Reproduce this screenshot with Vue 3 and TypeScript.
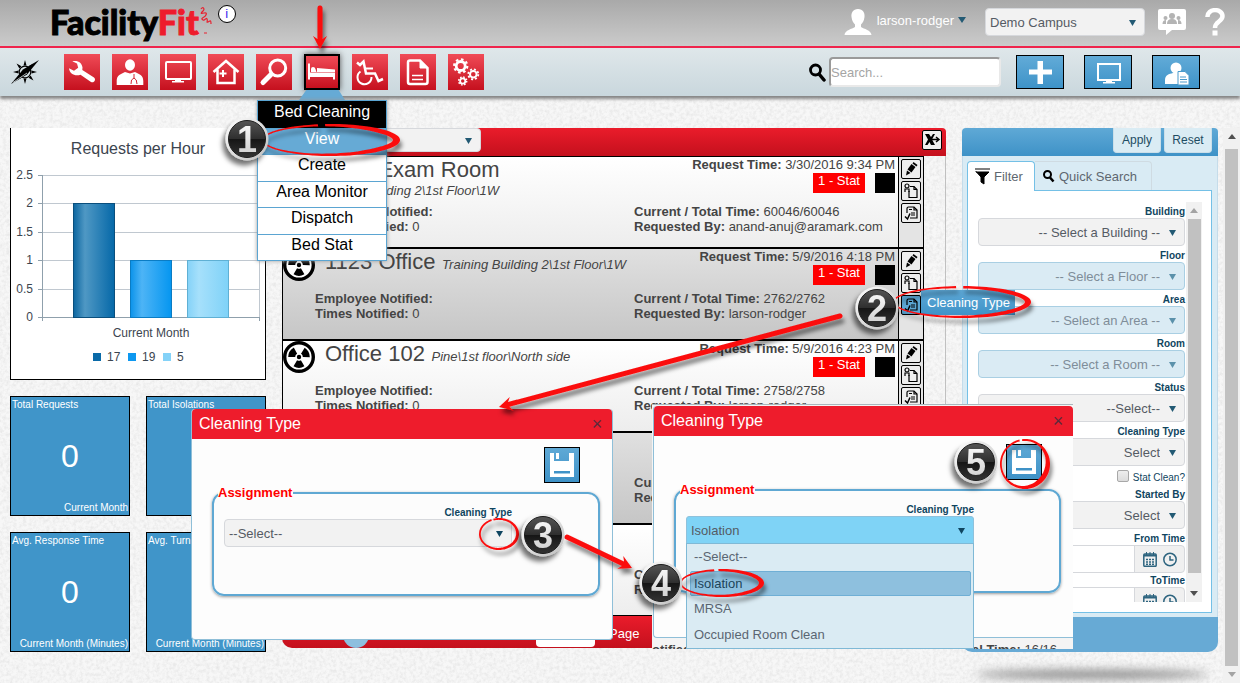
<script setup lang="ts">
import { ref } from 'vue'

interface RequestRow {
  title: string
  place: string
  time: string
  total: string
  by: string
  tip?: boolean
}

interface FilterField {
  id: string
  label: string
  value: string
  disabled?: boolean
}

const rows: RequestRow[] = [
  { title: '1122 Exam Room', place: 'Training Building 2\\1st Floor\\1W', time: '3/30/2016 9:34 PM', total: '60046/60046', by: 'anand-anuj@aramark.com' },
  { title: '1123 Office', place: 'Training Building 2\\1st Floor\\1W', time: '5/9/2016 4:18 PM', total: '2762/2762', by: 'larson-rodger', tip: true },
  { title: 'Office 102', place: 'Pine\\1st floor\\North side', time: '5/9/2016 4:23 PM', total: '2758/2758', by: 'larson-rodger' },
  { title: 'Office 103', place: 'Pine\\1st floor\\North side', time: '5/9/2016 4:25 PM', total: '2756/2756', by: 'larson-rodger' },
  { title: 'Office 104', place: 'Pine\\1st floor\\North side', time: '5/9/2016 4:27 PM', total: '2754/2754', by: 'larson-rodger' },
]

const topFields: FilterField[] = [
  { id: 'building', label: 'Building', value: '-- Select a Building --' },
  { id: 'floor', label: 'Floor', value: '-- Select a Floor --', disabled: true },
  { id: 'area', label: 'Area', value: '-- Select an Area --', disabled: true },
  { id: 'room', label: 'Room', value: '-- Select a Room --', disabled: true },
  { id: 'status', label: 'Status', value: '--Select--' },
  { id: 'cleaning', label: 'Cleaning Type', value: 'Select' },
]

const tiles = [
  { name: 'Total Requests', period: 'Current Month' },
  { name: 'Total Isolations', period: 'Current Month' },
  { name: 'Avg. Response Time', period: 'Current Month (Minutes)' },
  { name: 'Avg. Turn Time', period: 'Current Month (Minutes)' },
]

const menuItems = ['View', 'Create', 'Area Monitor', 'Dispatch', 'Bed Stat']
const typeOptions = ['--Select--', 'Isolation', 'MRSA', 'Occupied Room Clean']
const chosenType = ref('Isolation')
const statClean = ref(false)
const search = ref('')

const gridLines = [
  { y: 47, label: '2.5' },
  { y: 75, label: '2' },
  { y: 104, label: '1.5' },
  { y: 132, label: '1' },
  { y: 161, label: '0.5' },
  { y: 189, label: '0' },
]
const bars = [
  { x: 62, y: 75, h: 114, fill: 'url(#barA)', line: '#0a4f7d', name: '17', key: '#0a6aa8', kx: 82 },
  { x: 119, y: 132, h: 57, fill: 'url(#barB)', line: '#0a7cc4', name: '19', key: '#0d98f0', kx: 117 },
  { x: 176, y: 132, h: 57, fill: 'url(#barC)', line: '#5fb0d4', name: '5', key: '#84d2f8', kx: 152 },
]

/* Hand-drawn ring: a closed band, thickest at the angle `peak`, open at the angle `gap`. */
function ring(cx: number, cy: number, rx: number, ry: number, max: number, peak: number, gap: number): string {
  const outer: string[] = []
  const inner: string[] = []
  const steps = 90
  for (let i = 0; i <= steps; i++) {
    const a = ((gap + 3 + (354 * i) / steps) * Math.PI) / 180
    const k = Math.pow((1 + Math.cos(a - (peak * Math.PI) / 180)) / 2, 3)
    const w = 1.8 + (max - 1.8) * k
    outer.push((cx + rx * Math.cos(a)).toFixed(1) + ' ' + (cy + ry * Math.sin(a)).toFixed(1))
    inner.unshift((cx + (rx - w) * Math.cos(a)).toFixed(1) + ' ' + (cy + (ry - w) * Math.sin(a)).toFixed(1))
  }
  return 'M' + outer.join('L') + 'L' + inner.join('L') + 'Z'
}

const rings = [
  ring(331, 140, 69, 16, 7, 0, -98),
  ring(962, 302, 69, 16, 6, 0, -92),
  ring(499, 534, 20, 16, 3, 20, -110),
  ring(722, 583, 42, 14, 5, 0, -98),
  ring(1025, 464, 25, 25, 5, 30, -100),
]

interface Arrow { x: number; y: number; tx: number; ty: number }
const arrows: Arrow[] = [
  { x: 320, y: 8, tx: 320, ty: 49 },
  { x: 840, y: 316, tx: 499, ty: 407 },
  { x: 567, y: 537, tx: 632, ty: 568 },
]
function arrowLength(a: Arrow): number {
  return Math.hypot(a.tx - a.x, a.ty - a.y)
}
function arrowPath(a: Arrow): string {
  const l = arrowLength(a)
  return `M0 -2.5L${l - 10} -2.5L${l - 13} -7L${l} 0L${l - 13} 7L${l - 10} 2.5L0 2.5A2.5 2.5 0 0 1 0 -2.5Z`
}
function arrowPlace(a: Arrow): string {
  const deg = (Math.atan2(a.ty - a.y, a.tx - a.x) * 180) / Math.PI
  return `translate(${a.x} ${a.y}) rotate(${deg})`
}

const badges = [
  { n: 1, x: 247, y: 139 },
  { n: 2, x: 877, y: 308 },
  { n: 3, x: 543, y: 535 },
  { n: 4, x: 661, y: 583 },
  { n: 5, x: 976, y: 462 },
]
const rays = [0, 45, 90, 135, 180, 225, 270, 315]
</script>

<template>
  <div class="page">
    <svg class="texture" aria-hidden="true">
      <filter id="plaster" x="0" y="0" width="100%" height="100%">
        <feTurbulence type="fractalNoise" baseFrequency="0.3" numOctaves="4" seed="4" />
        <feColorMatrix values="0 0 0 0 0.4  0 0 0 0 0.4  0 0 0 0 0.4  0.4 0 0 0 -0.15" />
      </filter>
      <rect width="100%" height="100%" filter="url(#plaster)" />
    </svg>

    <header class="top">
      <div class="logo"><span>Facility</span><span class="fit">Fit</span></div>
      <svg class="swirl" width="12" height="30" viewBox="0 0 12 30" fill="none" stroke="#e8202e" stroke-width="1.2" aria-hidden="true">
        <path d="M1 2C3 -1 5 2 3 4S0 7 4 6S6 9 4 10S1 12 3 13S6 10 7 12S6 16 8 15S11 12 11 17" />
        <path d="M4 26H7" stroke-width="1" />
      </svg>
      <button class="info" aria-label="Information">i</button>

      <div class="spacer"></div>
      <svg width="28" height="28" viewBox="0 0 28 28" fill="#fff" aria-hidden="true">
        <path d="M14 1C9 1 7 5 7.500 9C8 13 9.500 15 11 16.500V19C8 21 1 22 .5 27H27.500C27 22 20 21 17 19V16.500C18.500 15 20 13 20.500 9C21 5 19 1 14 1Z" />
      </svg>
      <button class="user">larson-rodger<i class="caret"></i></button>
      <div class="pick campus">
        <select aria-label="Campus"><option>Demo Campus</option></select>
      </div>
      <button class="bare chat" aria-label="Messages">
        <svg width="28" height="28" viewBox="0 0 28 28">
          <path d="M2 1H26Q28 1 28 3V20Q28 22 26 22H14L8 27V22H2Q0 22 0 20V3Q0 1 2 1Z" fill="#fff" />
          <g fill="#b4b4b4"><circle cx="14" cy="8" r="3" /><path d="M9 16Q9 11 14 11T19 16Z" /><circle cx="7.500" cy="10" r="2" /><path d="M4.500 16Q4.500 12 8 12L8 16Z" /><circle cx="20.500" cy="10" r="2" /><path d="M23.500 16Q23.500 12 20 12V16Z" /></g>
        </svg>
      </button>
      <button class="bare" aria-label="Help">
        <svg width="20" height="28" viewBox="0 0 20 28">
          <path d="M2.500 9C2 0 17.500 0 17.500 8C17.500 14 10 13 10 20" fill="none" stroke="#fff" stroke-width="4.500" />
          <rect x="7.500" y="22.500" width="5" height="5" fill="#fff" />
        </svg>
      </button>
    </header>

    <nav class="bar">
      <svg class="compass" width="28" height="26" viewBox="0 0 28 26" aria-hidden="true">
        <g transform="translate(14 13)" fill="#000">
          <path v-for="r in rays" :key="r" d="M-1.500 -6.500L0 -12L1.500 -6.500Z" :transform="`rotate(${r})`" />
          <circle r="5.800" fill="none" stroke="#000" stroke-width="1.200" />
          <path d="M-14 12L-2 -2.500L14 -12L2 2.500Z" />
          <path d="M-12 10.500L2 1" stroke="#dbe4e8" stroke-width=".8" />
        </g>
      </svg>
      <div class="tools">
        <button aria-label="Work orders"><svg viewBox="0 0 36 36"><path d="M5 14.300L10 16.700L14.200 13.700L13 9.500L8.300 7.300C14 6 18 9 18.500 13.500L18.300 16L30 23.500C32.500 25.500 30 29.500 27 28L16.500 20.800C11 22.500 5.500 20 5 14.300Z" fill="#fff" /></svg></button>
        <button aria-label="Patients"><svg viewBox="0 0 36 36" fill="#fff"><ellipse cx="18" cy="11" rx="5" ry="5.800" /><path d="M4.700 31V27C4.700 21 9 20 13 18L18 19.500L23 18C27 20 31.300 21 31.300 27V31Z" /><path d="M22 20V24M22 24Q18.500 25 19 30M22 24Q25 25 25 30" fill="none" stroke="#d42734" /></svg></button>
        <button aria-label="Monitor"><svg viewBox="0 0 36 36"><rect x="6" y="8" width="25" height="17" rx="1" fill="none" stroke="#fff" stroke-width="2" /><path d="M15 25H21V27H24V28.500H12V27H15Z" fill="#fff" /></svg></button>
        <button aria-label="Facility"><svg viewBox="0 0 36 36" fill="none" stroke="#fff" stroke-width="2.500"><path d="M5.500 18L18 7L30.500 18M9.500 15.500V29H26.500V15.500" /><path d="M11.500 19.500H18.500M15 16V23" stroke-width="2" /></svg></button>
        <button aria-label="Find"><svg viewBox="0 0 36 36" fill="none" stroke="#fff"><circle cx="21.700" cy="14" r="8" stroke-width="3" /><path d="M15 20.500L7 28.500" stroke-width="5" stroke-linecap="round" /></svg></button>
        <div class="drop">
          <button class="on" aria-label="Bed Cleaning"><svg viewBox="2 2 32 32" fill="#fff"><path d="M4 9.500H6V18.500H31V25.500H29V23H6V25.500H4ZM13 14L31 15.500V18H13Z" /><path d="M7 15Q7 13 9 13T11.500 15T12.500 18H7Z" /></svg></button>
          <ul class="menu">
            <li class="head">Bed Cleaning</li>
            <li v-for="(m, i) in menuItems" :key="m" :class="{ hot: i === 0 }"><a href="#">{{ m }}</a></li>
          </ul>
        </div>
        <button aria-label="Transport"><svg viewBox="0 0 36 36" fill="none" stroke="#fff" stroke-width="2"><path d="M8.500 17.500A7 7 0 1 0 19.500 23" /><path d="M5 8.500L8 11L11.500 7.500L14 19.500H23L26.500 27L31 25" stroke-width="2.500" /><path d="M13 14.500H21" /></svg></button>
        <button aria-label="Reports"><svg viewBox="0 0 36 36" fill="none" stroke="#fff" stroke-width="2.500"><path d="M20 6.500H10Q8 6.500 8 8.500V28Q8 30 10 30H25.500Q27.500 30 27.500 28V14Z" /><path d="M20 7V14H27Z" fill="#fff" stroke-width="1" /><path d="M12 21.500H23M12 25.500H23" stroke-width="1.500" /></svg></button>
        <button aria-label="Settings"><svg viewBox="0 0 36 36" fill="none" stroke="#fff"><circle cx="12.700" cy="12" r="4.500" stroke-width="2.800" /><circle cx="12.700" cy="12" r="6.600" stroke-width="2.200" stroke-dasharray="2.600 2.584" /><circle cx="25.300" cy="20.300" r="3.300" stroke-width="2" /><circle cx="25.300" cy="20.300" r="5" stroke-width="1.800" stroke-dasharray="2 1.927" /><circle cx="14.700" cy="27" r="2.600" stroke-width="1.800" /><circle cx="14.700" cy="27" r="4" stroke-width="1.500" stroke-dasharray="1.600 1.541" /></svg></button>
      </div>
      <div class="spacer"></div>
      <label class="find" for="search">
        <svg width="17" height="19" viewBox="0 0 17 19" fill="none" stroke="#000" aria-hidden="true"><circle cx="6.500" cy="7" r="5" stroke-width="2.800" /><path d="M10 11L15 17" stroke-width="3.500" stroke-linecap="round" /></svg>
      </label>
      <input id="search" v-model="search" class="search" type="text" placeholder="Search..." />
      <div class="acts">
        <button aria-label="Add"><svg viewBox="0 0 46 32"><path d="M20.500 5H26V13.500H35V18.500H26V28H20.500V18.500H12V13.500H20.500Z" fill="#fff" /></svg></button>
        <button aria-label="Display"><svg viewBox="0 0 46 32"><rect x="13" y="8" width="22" height="16" fill="none" stroke="#fff" stroke-width="2" /><path d="M21 24H27V26H30V27.500H18V26H21Z" fill="#fff" /></svg></button>
        <button aria-label="Requester report"><svg viewBox="0 0 46 32"><circle cx="23" cy="12" r="5.500" fill="#fff" /><path d="M12 28V24C12 19 16 18 20 17H28V28Z" fill="#fff" /><path d="M25 15.500H32L36 19.500V29H25Z" fill="#fff" stroke="#4a9acc" /><path d="M27 21H33M27 23.500H34M27 26H34" stroke="#4a9acc" /></svg></button>
      </div>
    </nav>

    <main class="main">
      <section class="left">
        <svg class="chart" viewBox="0 0 254 251" role="img" aria-label="Requests per Hour">
          <defs>
            <linearGradient id="barA"><stop offset="0" stop-color="#0c66a0" /><stop offset=".28" stop-color="#4f98c4" /><stop offset="1" stop-color="#0568a8" /></linearGradient>
            <linearGradient id="barB"><stop offset="0" stop-color="#0b93ea" /><stop offset=".28" stop-color="#4db4f6" /><stop offset="1" stop-color="#0596f0" /></linearGradient>
            <linearGradient id="barC"><stop offset="0" stop-color="#84d2f8" /><stop offset=".28" stop-color="#a6e0fb" /><stop offset="1" stop-color="#7fd2f8" /></linearGradient>
          </defs>
          <text x="127" y="26" text-anchor="middle" class="chart-title">Requests per Hour</text>
          <g v-for="g in gridLines" :key="g.label">
            <path :d="`M27 ${g.y + 0.5}H248`" stroke="#c0c8d0" />
            <path :d="`M27 ${g.y + 0.5}H32`" stroke="#8fa0ac" />
            <text x="22" :y="g.y + 4" text-anchor="end">{{ g.label }}</text>
          </g>
          <path d="M31.500 47V193M27 189.500H249M248.500 189V193" stroke="#8fa0ac" fill="none" />
          <path d="M248.500 47V189" stroke="#c0c8d0" />
          <g v-for="b in bars" :key="b.name">
            <rect :x="b.x + 0.5" :y="b.y + 0.5" width="41" :height="b.h" :fill="b.fill" :stroke="b.line" />
            <rect :x="b.kx" y="225" width="8" height="8" :fill="b.key" />
            <text :x="b.kx + 14" y="233">{{ b.name }}</text>
          </g>
          <text x="140" y="209" text-anchor="middle">Current Month</text>
        </svg>
        <div class="tiles">
          <article v-for="t in tiles" :key="t.name" class="tile">
            <span>{{ t.name }}</span><strong>0</strong><span class="period">{{ t.period }}</span>
          </article>
        </div>
      </section>

      <section class="center">
        <div class="center-head">
          <div class="pick view"><select aria-label="List view"><option></option></select></div>
          <button class="mini" aria-label="Export to Excel"><svg viewBox="0 0 18 18"><path d="M2 3H6L8 6L10 3H12L9 8.500L12 14H8L6.500 11L4.500 14H2L5 8.500Z" fill="#000" /><path d="M9 8.500H15M13 6L16 8.500L13 11" fill="none" stroke="#000" stroke-width="1.500" /></svg></button>
        </div>
        <div class="list">
          <article v-for="r in rows" :key="r.title" class="row">
            <svg class="rad" width="32" height="32" viewBox="0 0 32 32" aria-hidden="true">
              <circle cx="16" cy="16" r="14.300" fill="#fff" stroke="#000" stroke-width="3.400" />
              <circle cx="16" cy="16" r="7.300" fill="none" stroke="#000" stroke-width="7" stroke-dasharray="7.644 7.644" transform="rotate(60 16 16)" />
              <circle cx="16" cy="16" r="2.200" />
            </svg>
            <div class="what"><span class="room">{{ r.title }}</span> <em>{{ r.place }}</em></div>
            <div class="when">
              <div><b>Request Time:</b> {{ r.time }}</div>
              <div class="flags"><span class="stat">1 - Stat</span><span class="swatch"></span></div>
            </div>
            <div class="told"><b>Employee Notified:</b><br /><b>Times Notified:</b> 0</div>
            <div class="took"><b>Current / Total Time:</b> {{ r.total }}<br /><b>Requested By:</b> {{ r.by }}</div>
            <div class="ops">
              <button class="mini" aria-label="Edit"><svg viewBox="0 0 18 18"><path d="M4 15.500L5 10.500L8.500 13Z" /><path d="M5.500 9.500L9.500 4L13.500 7L9.500 12.500Z" /><path d="M10.500 3.500L11.500 2L15.500 5L14.500 6.500Z" /></svg></button>
              <button class="mini" aria-label="Assign"><svg viewBox="0 0 18 18" fill="none" stroke="#000" stroke-width="1.200"><path d="M8 4.500H12L15 7.500V15.500H7V9" /><path d="M12 4.500V7.500H15" /><circle cx="5" cy="4" r="2" /><path d="M3 10V7H7V10" /></svg></button>
              <div class="hint">
                <button class="mini" :class="{ lit: r.tip }" aria-label="Cleaning Type"><svg viewBox="0 0 18 18" fill="none" stroke="#000" stroke-width="1.200"><path d="M5 9V4.500Q5 3 6.500 3H12L15 6V14H8" /><path d="M9 9H13M9 11H13M7 5.500H10M12 3V6H15" /><path d="M3 12.500L5.500 15L8 9.500" stroke-width="1.500" /></svg></button>
                <span v-if="r.tip" class="tip" role="tooltip">Cleaning Type</span>
              </div>
            </div>
          </article>
        </div>
        <div class="center-foot">
          <span class="knob"></span>
          <span class="pager"></span>
          <span class="per">Page</span>
        </div>
      </section>

      <aside class="right">
        <div class="right-head"><button>Apply</button><button>Reset</button></div>
        <div class="right-body">
          <div class="tabs">
            <button class="tab now"><svg width="15" height="17" viewBox="0 0 15 17"><path d="M0 1H15M1 4H14L9 9V16L6 14V9L1 3.500Z" stroke="#000" /></svg>Filter</button>
            <button class="tab"><svg width="12" height="13" viewBox="0 0 12 13" fill="none" stroke="#000"><circle cx="4.500" cy="4.500" r="3.500" stroke-width="2" /><path d="M7 7.500L10.500 11.500" stroke-width="2.500" /></svg>Quick Search</button>
          </div>
          <div class="sheet">
            <form class="fields" @submit.prevent>
              <div v-for="f in topFields" :key="f.id" class="field">
                <label :for="f.id">{{ f.label }}</label>
                <div class="pick end" :class="{ off: f.disabled }"><select :id="f.id" :disabled="f.disabled"><option>{{ f.value }}</option></select></div>
              </div>
              <div class="check"><input id="statclean" v-model="statClean" type="checkbox" /><label for="statclean">Stat Clean?</label></div>
              <div class="field">
                <label for="started">Started By</label>
                <div class="pick end"><select id="started"><option>Select</option></select></div>
              </div>
              <div v-for="d in ['From Time', 'ToTime']" :key="d" class="field">
                <label :for="d">{{ d }}</label>
                <div class="date">
                  <input :id="d" type="text" />
                  <span class="date-icons">
                    <svg width="14" height="15" viewBox="0 0 14 15" fill="none" stroke="#2d647f"><rect x=".8" y="2" width="12.400" height="12.300" rx="1" stroke-width="1.500" /><path d="M1 3.500H13" stroke-width="2" /><path d="M3.500 0V3M7 0V3M10.500 0V3" /><path d="M3 7.500H11M3 10H11M3 12.300H11" stroke-width="1.500" stroke-dasharray="2 1" /></svg>
                    <svg width="14" height="15" viewBox="0 0 14 15" fill="none" stroke="#2d647f" stroke-width="1.500"><circle cx="7" cy="7.500" r="6.200" /><path d="M7 4V8H10.500" /></svg>
                  </span>
                </div>
              </div>
            </form>
            <div class="rail"><i class="up dim"></i><i class="thumb short"></i><i class="down"></i></div>
          </div>
        </div>
        <div class="right-foot"></div>
      </aside>

      <div class="rail outer"><i class="up"></i><i class="thumb"></i><i class="down dim"></i></div>
    </main>

    <section class="dialog one" role="dialog" aria-label="Cleaning Type">
      <header class="dialog-head"><h2>Cleaning Type</h2><button class="close" aria-label="Close">×</button></header>
      <div class="save-line">
        <button class="save" aria-label="Save"><svg viewBox="0 0 34 34"><path d="M5 5H9V13H24V5H29V29H5Z" fill="#fff" /><path d="M11 5H14V11H11Z" fill="#fff" /><path d="M9 23H25V25.500H9Z" fill="#3f92c7" /></svg></button>
      </div>
      <fieldset>
        <legend>Assignment</legend>
        <div class="assign">
          <label for="type-a">Cleaning Type</label>
          <div class="pick"><select id="type-a"><option>--Select--</option></select></div>
        </div>
      </fieldset>
    </section>

    <div class="shot">
      <section class="dialog two" role="dialog" aria-label="Cleaning Type">
        <header class="dialog-head"><h2>Cleaning Type</h2><button class="close" aria-label="Close">×</button></header>
        <div class="save-line">
          <button class="save" aria-label="Save"><svg viewBox="0 0 34 34"><path d="M5 5H9V13H24V5H29V29H5Z" fill="#fff" /><path d="M11 5H14V11H11Z" fill="#fff" /><path d="M9 23H25V25.500H9Z" fill="#3f92c7" /></svg></button>
        </div>
        <fieldset>
          <legend>Assignment</legend>
          <div class="assign">
            <label for="type-b">Cleaning Type</label>
            <div class="pick open">
              <select id="type-b" v-model="chosenType"><option v-for="o in typeOptions" :key="o">{{ o }}</option></select>
              <ul class="options" role="listbox" aria-label="Cleaning types">
                <li v-for="o in typeOptions" :key="o" role="option" :aria-selected="o === chosenType" :class="{ hot: o === chosenType }">{{ o }}</li>
              </ul>
            </div>
          </div>
        </fieldset>
      </section>
      <div class="under"><b>otified:</b><span><b>al Time:</b> 16/16</span></div>
    </div>

    <svg class="notes" width="1240" height="683" viewBox="0 0 1240 683">
      <defs>
        <linearGradient id="rim" x2="1" y2="1"><stop offset="0" stop-color="#fff" /><stop offset="1" stop-color="#bdbdbd" /></linearGradient>
        <linearGradient id="ball" x2="0" y2="1"><stop offset="0" stop-color="#555" /><stop offset=".5" stop-color="#2e2e2e" /><stop offset=".51" stop-color="#161616" /><stop offset="1" stop-color="#333" /></linearGradient>
        <linearGradient id="digit" x2="0" y2="1"><stop offset="0" stop-color="#fff" /><stop offset="1" stop-color="#c9c9c9" /></linearGradient>
        <filter id="shade" filterUnits="userSpaceOnUse" x="0" y="0" width="1240" height="683"><feDropShadow dx="2" dy="5" stdDeviation="2" flood-opacity=".5" /></filter>
        <filter id="ballshade" x="-40%" y="-40%" width="180%" height="180%"><feDropShadow dx="-3" dy="5" stdDeviation="2.500" flood-opacity=".55" /></filter>
      </defs>
      <g fill="#fb0d0d" filter="url(#shade)">
        <path v-for="(r, i) in rings" :key="i" :d="r" />
        <path v-for="a in arrows" :key="a.x" :d="arrowPath(a)" :transform="arrowPlace(a)" />
      </g>
      <g v-for="b in badges" :key="b.n" :transform="`translate(${b.x} ${b.y})`">
        <circle r="21.500" fill="url(#rim)" filter="url(#ballshade)" />
        <circle r="18.500" fill="url(#ball)" stroke="#1c1c1c" />
        <text y="13" text-anchor="middle" class="digit">{{ b.n }}</text>
      </g>
    </svg>
  </div>
</template>

<style>
body {
  margin: 0;
}
</style>

<style scoped>
* {
  box-sizing: border-box;
}
.page {
  position: relative;
  display: flex;
  flex-direction: column;
  min-height: 100vh;
  overflow: hidden;
  background: #f7f7f7;
  color: #444;
  font: 13px/15px "Liberation Sans", Arial, sans-serif;
}
button,
select,
input {
  font: inherit;
  color: inherit;
  margin: 0;
}
button {
  padding: 0;
  border: 0;
  background: none;
}
svg {
  display: block;
}
ul {
  margin: 0;
  padding: 0;
  list-style: none;
}
.texture {
  position: absolute;
  inset: 0;
  width: 100%;
  height: 100%;
}
.spacer {
  flex: 1;
}

/* top strip */
.top {
  position: relative;
  display: flex;
  align-items: center;
  height: 48px;
  padding: 0 15px 2px 50px;
  border-bottom: 2px solid #f0244c;
  background: linear-gradient(#a9a9a9, #cbcbcb);
}
.logo {
  font: 900 34px/40px Lato, "Liberation Sans", sans-serif;
  color: #000;
  -webkit-text-stroke: 1px currentColor;
}
.fit {
  color: #ee1c2c;
}
.swirl {
  margin-left: 1px;
}
.info {
  width: 18px;
  height: 18px;
  margin: 0 0 16px 6px;
  border: 1px solid #000;
  border-radius: 50%;
  background: #fff;
  color: #3a2cf0;
  line-height: 16px;
}
.user {
  display: flex;
  align-items: center;
  gap: 4px;
  margin: 0 19px 4px 5px;
  color: #fff;
}
.caret {
  width: 0;
  height: 0;
  border: 4px solid transparent;
  border-top: 6px solid #235a74;
  border-bottom: 0;
}
.campus {
  width: 160px;
}
.chat {
  margin: 0 19px 0 13px;
}

/* select boxes */
.pick {
  position: relative;
}
.pick select {
  display: block;
  width: 100%;
  height: 28px;
  padding: 0 24px 0 4px;
  border: 1px solid #d6d8dc;
  border-radius: 4px;
  background: #f2f2f2;
  color: #555b64;
  appearance: none;
  opacity: 1;
}
.pick::after {
  content: "";
  position: absolute;
  top: 12px;
  right: 9px;
  width: 7px;
  height: 6px;
  background: #235a74;
  clip-path: polygon(0 0, 100% 0, 50% 100%);
  pointer-events: none;
}
.end select {
  text-align: right;
  text-align-last: right;
}
.off select {
  border-color: #a9cfe3;
  background: #daebf4;
  color: #7f8d99;
}
.off::after {
  background: #5b91ab;
}

/* tool strip */
.bar {
  position: relative;
  z-index: 5;
  display: flex;
  align-items: center;
  height: 48px;
  padding: 0 40px 0 11px;
  background: linear-gradient(#dfe7ea, #c9d7dd);
  box-shadow: 0 3px 3px #858585;
}
.tools {
  display: flex;
  gap: 12px;
  margin-left: 25px;
}
.tools button {
  display: block;
  width: 36px;
  height: 36px;
  background: linear-gradient(#f04b57, #c5101e);
}
.drop {
  position: relative;
}
.tools .on {
  border: 2px solid #000;
  box-shadow: 0 0 6px #555;
}
.drop::after {
  content: "";
  position: absolute;
  top: 36px;
  left: -5px;
  width: 46px;
  height: 10px;
  background: #66aad5;
  clip-path: polygon(16% 0, 86% 0, 100% 100%, 0 100%);
}
.menu {
  position: absolute;
  z-index: 1;
  top: 46px;
  left: -47px;
  display: grid;
  grid-auto-rows: 1fr;
  width: 130px;
  height: 161px;
  border: 1px solid #5ba5d2;
  background: #fff;
  color: #000;
  font-size: 16px;
  line-height: 22px;
  text-align: center;
  box-shadow: 0 0 4px #999;
}
.menu li + li {
  border-top: 1px solid #5ba5d2;
  line-height: 20px;
}
.menu .head {
  background: #000;
  color: #fff;
}
.menu .hot {
  background: #66aad5;
}
.menu a {
  display: block;
  color: #000;
  text-decoration: none;
}
.menu .hot a {
  color: #fff;
}
.find {
  margin-right: 3px;
}
.search {
  width: 172px;
  height: 30px;
  padding: 0;
  border: 2px solid #e9e9e9;
  border-top-color: #9a9a9a;
  border-left-color: #9a9a9a;
  border-radius: 4px;
  background: #fff;
}
.search::placeholder {
  color: #a5a5a5;
}
.acts {
  display: flex;
  gap: 20px;
  margin-left: 15px;
}
.acts button {
  width: 48px;
  height: 34px;
  border: 1px solid #000;
  background: linear-gradient(#62abd8, #3e93c8);
}

/* page body */
.main {
  position: relative;
  display: flex;
  flex: 1;
  align-items: flex-start;
  gap: 16px;
  padding: 32px 0 0 10px;
}
.left {
  width: 256px;
}
.chart {
  width: 100%;
  border: 1px solid #000;
  border-top: 0;
  background: #fff;
  font-size: 12px;
}
.chart text {
  fill: #3c454f;
}
.chart .chart-title {
  font-size: 16px;
}
.tiles {
  display: grid;
  grid-template-columns: 1fr 1fr;
  gap: 16px;
  margin-top: 16px;
}
.tile {
  display: flex;
  flex-direction: column;
  justify-content: space-between;
  height: 120px;
  padding: 1px;
  border: 1px solid #000;
  background: #4095c9;
  color: #fff;
  font-size: 10px;
  line-height: 13px;
  white-space: nowrap;
}
.tile strong {
  font-size: 32px;
  font-weight: 400;
  line-height: 32px;
  text-align: center;
}
.period {
  text-align: right;
}

/* request list */
.center {
  position: relative;
  z-index: 2;
  flex: 1;
  min-width: 0;
}
.center-head {
  display: flex;
  justify-content: space-between;
  height: 28px;
  padding: 0 4px;
  border-radius: 0 4px 0 0;
  background: linear-gradient(#ea1c2b, #c4101d);
}
.view {
  width: 195px;
  height: 24px;
}
.view select {
  height: 24px;
}
.view::after {
  top: 10px;
}
.mini {
  display: block;
  width: 20px;
  height: 20px;
  border: 1px solid #000;
  border-radius: 2px;
  background: #eee;
}
.center-head .mini {
  margin-top: 2px;
}
.list {
  padding-right: 21px;
  border-right: 1px solid #c0c0c0;
}
.row {
  display: grid;
  grid-template-columns: 32px 1fr 264px 25px;
  grid-template-rows: auto 1fr;
  height: 92px;
  border: solid #000;
  border-width: 0 1px 2px;
  background: linear-gradient(#fff, #ededed);
}
.row:first-child {
  height: 93px;
  border-top-width: 1px;
}
.row:last-child {
  height: 91px;
  border-bottom-width: 1px;
}
.row:nth-child(even) {
  background: linear-gradient(#e0e0e0, #c6c6c6);
}
.rad {
  grid-row: 1 / 3;
}
.what {
  min-height: 42px;
  padding-bottom: 6px;
}
.what em {
  display: inline-block;
  white-space: nowrap;
}
.room {
  margin: 0 3px 0 10px;
  font-size: 22px;
  line-height: 26px;
}
.when {
  padding-right: 3px;
  text-align: right;
}
.flags {
  display: flex;
  justify-content: flex-end;
  gap: 10px;
  margin-top: 1px;
}
.stat {
  padding: 0 5px;
  height: 20px;
  background: #f00;
  color: #fff;
}
.swatch {
  width: 20px;
  background: #000;
}
.told {
  grid-area: 2 / 2;
}
.took {
  grid-area: 2 / 3;
}
.ops {
  display: flex;
  flex-direction: column;
  gap: 2px;
  grid-area: 1 / 4 / 3 / 5;
  padding: 2px;
  border-left: 1px solid #000;
  background: #e4e4e4;
}
.hint {
  position: relative;
}
.mini.lit {
  background: #5ba6d4;
}
.tip {
  position: absolute;
  top: -5px;
  left: 20px;
  padding: 5px 5px 5px 6px;
  background: linear-gradient(#5ea8d6, #3f93c8);
  color: #fff;
  white-space: nowrap;
}
.center-foot {
  position: relative;
  display: flex;
  height: 32px;
  border-radius: 0 0 10px 10px;
  background: linear-gradient(#ea1c2b, #c4101d);
  color: #fff;
  overflow: hidden;
}
.knob {
  width: 26px;
  height: 26px;
  margin: 6px 0 0 61px;
  border-radius: 50%;
  background: #8dbfdf;
}
.pager {
  width: 59px;
  height: 25px;
  margin: 6px 0 0 167px;
  border-radius: 4px;
  background: #fff;
}
.per {
  margin: 10px 0 0 14px;
}

/* filter panel */
.right {
  position: relative;
  width: 256px;
}
.right-head {
  display: flex;
  justify-content: flex-end;
  gap: 3px;
  height: 28px;
  padding-right: 6px;
  border-radius: 4px 4px 0 0;
  background: linear-gradient(#5fa9d6, #3e92c7);
}
.right-head button {
  width: 48px;
  height: 25px;
  border: 1px solid #cbdfe9;
  border-top: 0;
  border-radius: 0 0 4px 4px;
  background: #daecf4;
  color: #1e4d63;
  font-size: 12px;
}
.right-body {
  padding: 5px 5px 4px 4px;
  border: solid #c5dcea;
  border-width: 0 1px;
  background: #d9ebf4;
}
.tabs {
  display: flex;
}
.tab {
  display: flex;
  align-items: center;
  gap: 4px;
  height: 29px;
  padding: 0 14px 0 8px;
  border: 1px solid #cfdbe2;
  border-width: 1px 1px 0 0;
  border-radius: 0 4px 0 0;
  color: #5e6770;
}
.tab.now {
  position: relative;
  width: 68px;
  height: 30px;
  margin-bottom: -1px;
  padding: 0 0 0 7px;
  border: 1px solid #74c0e6;
  border-bottom: 0;
  border-radius: 4px 4px 0 0;
  background: #fff;
}
.sheet {
  display: flex;
  justify-content: flex-end;
  height: 423px;
  padding: 11px 9px 11px 10px;
  border: 1px solid #74c0e6;
  background: #fff;
}
.fields {
  flex: 1;
  height: 400px;
  padding-right: 1px;
  overflow: hidden;
}
.field {
  display: flex;
  flex-direction: column;
}
.field label,
.check label,
.assign label {
  color: #0f4560;
  font-size: 10px;
  font-weight: 700;
  line-height: 12px;
  text-align: right;
}
.field label {
  padding-top: 4px;
}
.field:last-child label {
  padding-top: 2px;
}
.check {
  display: flex;
  justify-content: flex-end;
  align-items: center;
  gap: 4px;
  height: 19px;
}
.check label {
  padding-top: 4px;
  font-weight: 400;
}
.check input {
  width: 12px;
  height: 12px;
  border: 1px solid #a8a8a8;
  border-radius: 2px;
  background: linear-gradient(#eee, #dcdcdc);
  appearance: none;
}
.date {
  display: flex;
  height: 28px;
  border: 1px solid #d6d8dc;
  border-radius: 4px;
  background: #f0f0f0;
  overflow: hidden;
}
.date input {
  flex: 1;
  min-width: 0;
  border: 0;
  border-right: 1px solid #d6d8dc;
  background: #fff;
}
.date-icons {
  display: flex;
  align-items: center;
  gap: 6px;
  padding: 0 7px 0 8px;
}
.rail {
  display: flex;
  flex-direction: column;
  align-items: center;
  width: 16px;
  height: 400px;
  background: #f1f1f1;
}
.thumb {
  flex: 1;
  width: 13px;
  background: #c1c1c1;
}
.short {
  margin-bottom: 12px;
}
.up,
.down {
  width: 0;
  margin: 6px 0;
  border: 4px solid transparent;
}
.up {
  border-top: 0;
  border-bottom: 5px solid #505050;
}
.down {
  border-bottom: 0;
  border-top: 5px solid #505050;
}
.up.dim {
  border-bottom-color: #a3a3a3;
}
.down.dim {
  border-top-color: #a3a3a3;
}
.outer {
  align-self: stretch;
  width: 17px;
  height: auto;
  margin-left: -11px;
}
.outer .up {
  margin-bottom: 10px;
}
.right-foot {
  height: 35px;
  border-radius: 0 0 10px 10px;
  background: #67aad5;
}
.right::after {
  content: "";
  position: absolute;
  top: 542px;
  left: 14px;
  right: 10px;
  height: 9px;
  border-radius: 50%;
  background: #8a8a8a;
  filter: blur(5px);
}

/* dialogs */
.dialog {
  border: 1px solid #8fbfd8;
  border-top: 0;
  border-radius: 4px;
  background: #fdfdfd;
}
.one {
  position: absolute;
  z-index: 6;
  top: 409px;
  left: 191px;
  width: 422px;
  height: 231px;
}
.shot {
  position: absolute;
  z-index: 7;
  top: 404px;
  left: 652px;
  width: 421px;
  height: 245px;
  border-top: 1px solid #a9b7bd;
  background: #f4f4f4;
  overflow: hidden;
}
.two {
  position: relative;
  height: 232px;
  margin: 1px 0 0 1px;
  border-right: 0;
  border-radius: 4px 0 0 4px;
}
.dialog-head {
  display: flex;
  justify-content: space-between;
  align-items: center;
  height: 30px;
  padding: 0 9px 0 7px;
  border-radius: 4px 4px 0 0;
  background: #ee1c2c;
}
.dialog h2 {
  margin: 0;
  color: #fff;
  font-size: 16px;
  font-weight: 400;
  line-height: 20px;
}
.close {
  width: 12px;
  color: #5c2b3c;
  font-size: 18px;
  line-height: 20px;
}
.save-line {
  display: flex;
  justify-content: flex-end;
  padding: 8px 32px 2px 0;
}
.two .save-line {
  padding-right: 31px;
}
.save {
  width: 36px;
  height: 36px;
  border: 1px solid #000;
  background: linear-gradient(#5fa9d6, #3e92c7);
}
fieldset {
  min-width: 0;
  height: 111px;
  margin: 0 12px 0 20px;
  padding: 7px 10px 0;
  border: 2px solid #5fa8d3;
  border-radius: 12px;
  background: #fcfcfc;
  box-shadow: 0 1px 3px #999;
}
legend {
  margin-left: -6px;
  padding: 0 1px 0 0;
  background: #fdfdfd;
  color: #f00;
  font-weight: 700;
}
.assign {
  position: relative;
  display: flex;
  flex-direction: column;
  width: 288px;
}
.open select {
  border-color: #8fc2dc;
  border-radius: 3px 3px 0 0;
  background: #7fd3f6;
}
.assign .pick::after {
  background: #0f4560;
}
.options {
  position: absolute;
  z-index: 1;
  top: 27px;
  left: 0;
  right: 0;
  display: grid;
  gap: 1px;
  height: 106px;
  padding: 1px 2px 0 3px;
  border: 1px solid #7fb9d6;
  background: #daebf3;
}
.options li {
  height: 25px;
  padding: 0 4px;
  color: #5a6672;
  line-height: 24px;
}
.options .hot {
  padding: 0 3px;
  border: 1px solid #6fafd5;
  border-radius: 2px;
  background: #8ec0de;
  color: #1c4459;
  line-height: 23px;
}
.under {
  display: flex;
  justify-content: space-between;
  padding: 4px 16px 0 0;
}

/* numbered steps */
.notes {
  position: absolute;
  z-index: 9;
  top: 0;
  left: 0;
  pointer-events: none;
}
.digit {
  fill: url(#digit);
  font-size: 36px;
  font-weight: 700;
}
</style>
